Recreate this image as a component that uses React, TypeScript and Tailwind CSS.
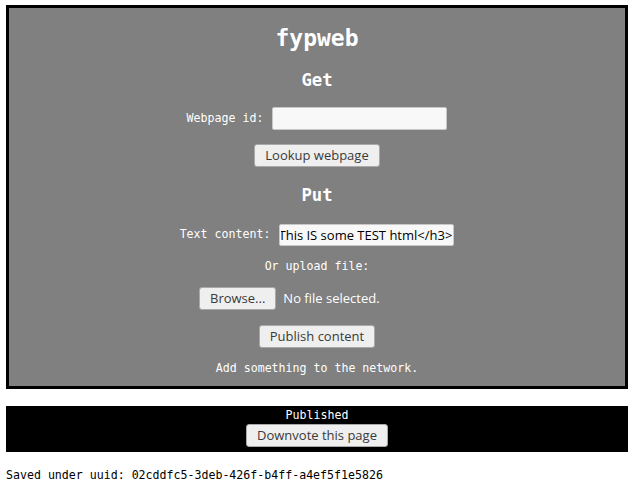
import React from "react";

const mono = { fontFamily: '"DejaVu Sans Mono", monospace' };

function Btn({ children }: { children: React.ReactNode }) {
  return (
    <button className="h-[23px] px-[10px] bg-[#efefef] border border-[#a9a9a9] rounded-[3px] text-[13px] text-[#3a3a3a] font-['Open_Sans',sans-serif] leading-none">
      {children}
    </button>
  );
}

export default function App() {
  return (
    <div className="bg-white min-h-[504px] pt-[5px] pl-[6px] pr-[4px] text-[11.6px] text-black font-['DejaVu_Sans_Mono',monospace]">
      <div className="border-[3px] border-black bg-[#808080] text-white flex flex-col items-center h-[384px]">
        <h1 className="mt-[16px] text-[23px] font-bold leading-[28px]">fypweb</h1>
        <h2 className="mt-[17px] text-[17.3px] font-bold leading-[22px]">Get</h2>
        <div className="mt-[16px] flex items-center gap-[9px]">
          <span>Webpage id:</span>
          <input className="w-[175px] h-[23px] bg-[#f8f8f8] border border-[#c8c8c8] rounded-[2px]" />
        </div>
        <div className="mt-[14px]">
          <Btn>Lookup webpage</Btn>
        </div>
        <h2 className="mt-[17px] text-[17.3px] font-bold leading-[22px]">Put</h2>
        <div className="mt-[18px] flex items-center gap-[9px]">
          <span>Text content:</span>
          <input
            defaultValue="<h3>This IS some TEST html</h3>"
            className="w-[175px] h-[22px] bg-[#f8f8f8] border border-[#c8c8c8] rounded-[2px] text-[13px] text-black px-[1px] font-['Open_Sans',sans-serif]"
            style={{ direction: "rtl" }}
          />
        </div>
        <div className="mt-[11px] leading-[18px]">Or upload file:</div>
        <div className="mt-[12px] w-[236px] flex items-center gap-[7px] font-['Open_Sans',sans-serif] text-[13px]">
          <Btn>Browse...</Btn>
          <span className="text-white">No file selected.</span>
        </div>
        <div className="mt-[15px]">
          <Btn>Publish content</Btn>
        </div>
        <div className="mt-[11px] leading-[18px]">Add something to the network.</div>
      </div>
      <div className="mt-[17px] bg-black text-white flex flex-col items-center h-[46px]" style={mono}>
        <div className="mt-[1px] leading-[17px]">Published</div>
        <Btn>Downvote this page</Btn>
      </div>
      <div className="mt-[14px] leading-[18px]">Saved under uuid: 02cddfc5-3deb-426f-b4ff-a4ef5f1e5826</div>
    </div>
  );
}
